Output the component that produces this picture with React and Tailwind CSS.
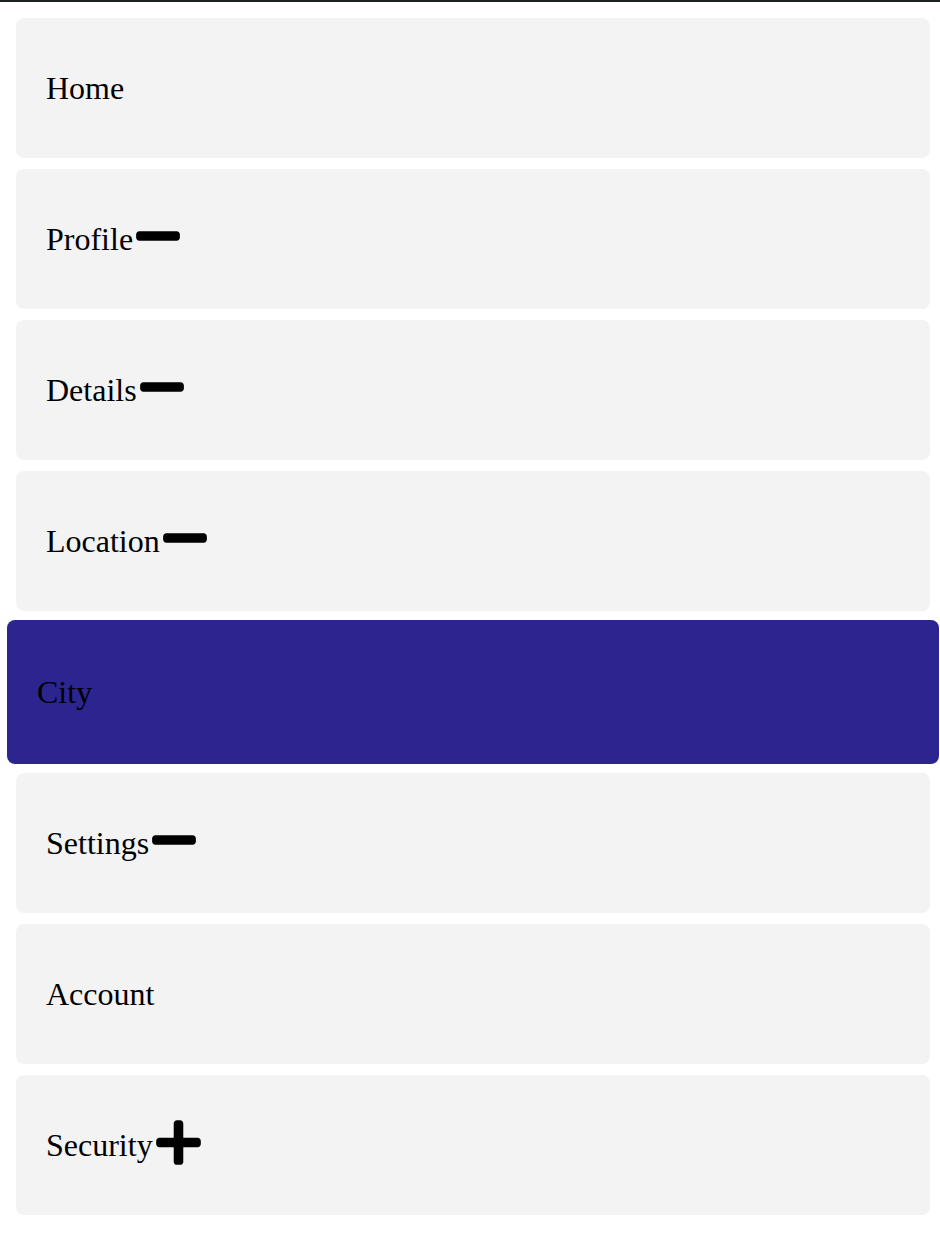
import { FaMinus, FaPlus } from "react-icons/fa";

const items = [
    { label: "Home" },
    { label: "Profile", icon: "minus" },
    { label: "Details", icon: "minus" },
    { label: "Location", icon: "minus" },
    { label: "City", active: true },
    { label: "Settings", icon: "minus" },
    { label: "Account" },
    { label: "Security", icon: "plus" },
];

function MenuItem({ label, icon, active }) {
    return (
        <div
            className={
                active
                    ? "flex items-center h-[144px] -mx-[9px] -my-[2px] px-[30px] rounded-lg bg-[#2c2590]"
                    : "flex items-center h-[140px] px-[30px] rounded-lg bg-[#f3f3f3]"
            }
        >
            <span className="text-[32px] text-black">{label}</span>
            {icon === "minus" && <FaMinus className="text-[50px] mb-[6px] text-black" />}
            {icon === "plus" && <FaPlus className="text-[51px] mb-[6px] text-black" />}
        </div>
    );
}

export default function App() {
    return (
        <div
            className="min-h-[1234px] bg-white border-t-2 border-[#1f2224] pl-4 pr-[10px] pt-4"
            style={{ fontFamily: '"Liberation Serif", "Times New Roman", serif' }}
        >
            <div className="flex flex-col gap-[11px]">
                {items.map((item) => (
                    <MenuItem key={item.label} {...item} />
                ))}
            </div>
        </div>
    );
}
